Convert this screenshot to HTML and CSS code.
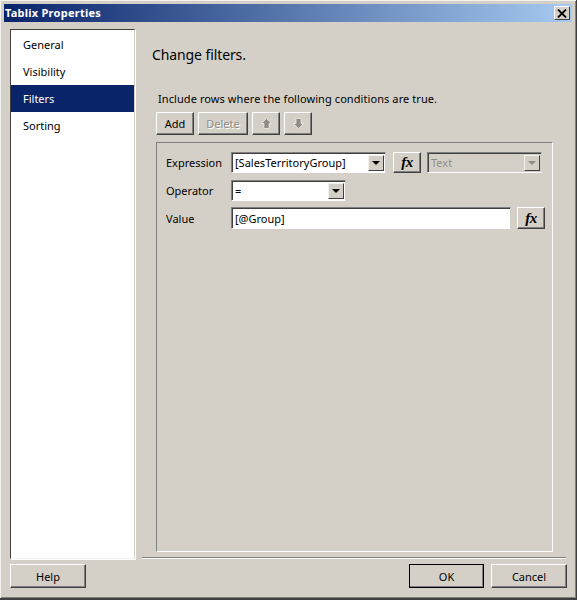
FILE: index.html
```html
<!DOCTYPE html>
<html>
    <head>
        <link rel="stylesheet" href="styles.css">
    </head>
    <body>
        <div class="window">
            <div class="titlebar">
                <span class="title">Tablix Properties</span>
                <div class="close">
                    <svg width="10" height="9" viewBox="0 0 10 9"><path d="M1 0.5L9 8.5M9 0.5L1 8.5" stroke="#000" stroke-width="1.8" fill="none"/></svg>
                </div>
            </div>
            <div class="content">
                <div class="sidebar">
                    <div class="nav-item">General</div>
                    <div class="nav-item">Visibility</div>
                    <div class="nav-item selected">Filters</div>
                    <div class="nav-item">Sorting</div>
                </div>
                <div class="main">
                    <div class="heading">Change filters.</div>
                    <div class="intro">Include rows where the following conditions are true.</div>
                    <div class="toolbar">
                        <div class="btn btn-add">Add</div>
                        <div class="btn btn-delete disabled">Delete</div>
                        <div class="btn btn-move">
                            <svg width="13" height="13" viewBox="0 0 13 13"><path d="M6.5 1.5L11.5 6.5H9V11.5H4V6.5H1.5Z" fill="#8f8c85" stroke="#f4f2ee" stroke-width="0.7"/></svg>
                        </div>
                        <div class="btn btn-move">
                            <svg width="13" height="13" viewBox="0 0 13 13"><path d="M6.5 11.5L11.5 6.5H9V1.5H4V6.5H1.5Z" fill="#8f8c85" stroke="#f4f2ee" stroke-width="0.7"/></svg>
                        </div>
                    </div>
                    <div class="panel">
                        <div class="row row-expression">
                            <span class="label">Expression</span>
                            <div class="field select select-expression">
                                <span class="value">[SalesTerritoryGroup]</span>
                                <span class="arrow"></span>
                            </div>
                            <div class="btn btn-fx">fx</div>
                            <div class="field select select-type disabled">
                                <span class="value">Text</span>
                                <span class="arrow"></span>
                            </div>
                        </div>
                        <div class="row row-operator">
                            <span class="label">Operator</span>
                            <div class="field select select-operator">
                                <span class="value">=</span>
                                <span class="arrow"></span>
                            </div>
                        </div>
                        <div class="row row-value">
                            <span class="label">Value</span>
                            <div class="field input-value">
                                <span class="value">[@Group]</span>
                            </div>
                            <div class="btn btn-fx">fx</div>
                        </div>
                    </div>
                    <div class="divider"></div>
                </div>
            </div>
            <div class="footer">
                <div class="btn btn-footer">Help</div>
                <div class="footer-right">
                    <div class="btn btn-footer btn-default">OK</div>
                    <div class="btn btn-footer">Cancel</div>
                </div>
            </div>
        </div>
    </body>
</html>
```

FILE: styles.css
```css
* {
    box-sizing: border-box;
}
body {
    margin: 0px;
    background-color: #d4d0c8;
    font-family: "Noto Sans", sans-serif;
    font-size: 11px;
    color: #000;
}
.window {
    width: 577px;
    height: 600px;
    padding: 4px 4px 4px 4px;
    display: flex;
    flex-direction: column;
    background-color: #d4d0c8;
    border-right: 1px solid #404040;
    border-bottom: 2px solid #404040;
    box-shadow: inset 1px 1px 0 #f4f2ee, inset -1px -1px 0 #808080;
}
.titlebar {
    height: 18px;
    flex: none;
    display: flex;
    align-items: center;
    justify-content: space-between;
    padding: 0 2px 0 1px;
    background: linear-gradient(to right, #0a246a, #a6caf0);
    color: white;
    font-weight: bold;
}
.title {
    letter-spacing: 0.25px;
    margin-bottom: 1px;
}
.close {
    width: 16px;
    height: 14px;
    display: flex;
    align-items: center;
    justify-content: center;
    background-color: #d4d0c8;
    border: 1px solid;
    border-color: #fff #404040 #404040 #fff;
}
.content {
    flex: 1;
    display: flex;
    padding: 7px 0 0 6px;
    min-height: 0;
}
.sidebar {
    width: 125px;
    height: 530px;
    flex: none;
    padding-top: 1px;
    background-color: white;
    border: 1px solid;
    border-color: #404040 #d4d0c8 #f4f2ee #404040;
    box-shadow: 1px 1px 0 #fff;
}
.nav-item {
    height: 27px;
    line-height: 28px;
    padding-left: 12px;
}
.nav-item.selected {
    background-color: #0a246a;
    color: white;
}
.main {
    flex: 1;
    display: flex;
    flex-direction: column;
    padding-left: 7px;
    min-width: 0;
}
.heading {
    height: 20px;
    margin: 16px 0 0 10px;
    font-size: 14px;
    line-height: 20px;
    letter-spacing: -0.1px;
}
.intro {
    height: 14px;
    margin: 27px 0 0 16px;
    line-height: 14px;
    letter-spacing: 0.08px;
}
.toolbar {
    display: flex;
    gap: 4px;
    margin: 6px 0 0 14px;
}
.btn {
    display: flex;
    align-items: center;
    justify-content: center;
    height: 23px;
    background-color: #d4d0c8;
    border: 1px solid;
    border-color: #fff #404040 #404040 #fff;
    box-shadow: inset -1px -1px 0 #808080;
}
.btn.disabled {
    color: #8f8c85;
    text-shadow: 1px 1px 0 #fff;
}
.btn-add {
    width: 38px;
}
.btn-delete {
    width: 50px;
}
.btn-move {
    width: 28px;
}
.panel {
    width: 397px;
    height: 410px;
    margin: 7px 0 0 14px;
    padding: 9px 7px 0 9px;
    border: 1px solid;
    border-color: #808080 #fff #fff #808080;
}
.row {
    display: flex;
    align-items: center;
    height: 21px;
    margin-bottom: 7px;
}
.row-operator {
    margin-bottom: 6px;
}
.row-value {
    height: 22px;
}
.label {
    width: 65px;
    flex: none;
}
.field {
    height: 100%;
    display: flex;
    align-items: center;
    justify-content: space-between;
    padding: 0 1px 0 3px;
    background-color: white;
    border: 1px solid;
    border-color: #808080 #d4d0c8 #fff #808080;
    box-shadow: inset 1px 1px 0 #404040;
}
.select-expression {
    width: 155px;
}
.select-type {
    width: 115px;
    margin-left: 6px;
}
.select-operator {
    width: 115px;
}
.input-value {
    width: 281px;
}
.field.disabled {
    background-color: #d4d0c8;
    color: #8f8c85;
}
.arrow {
    width: 16px;
    height: 16px;
    flex: none;
    position: relative;
    background-color: #d4d0c8;
    border: 1px solid;
    border-color: #f4f2ee #404040 #404040 #f4f2ee;
}
.arrow::after {
    content: "";
    position: absolute;
    left: 3px;
    top: 5px;
    border-style: solid;
    border-width: 4px 4px 0 4px;
    border-color: #000 transparent transparent transparent;
}
.disabled .arrow::after {
    border-top-color: #8f8c85;
}
.btn-fx {
    width: 28px;
    height: 100%;
    margin-left: 7px;
    font-family: "Liberation Serif", serif;
    font-style: italic;
    font-weight: bold;
    font-size: 15px;
    letter-spacing: -0.5px;
}
.row-value .btn-fx {
    margin-left: 6px;
}
.divider {
    width: 424px;
    height: 2px;
    margin-top: 5px;
    border-top: 1px solid #808080;
    border-bottom: 1px solid #fff;
}
.footer {
    height: 24px;
    flex: none;
    display: flex;
    justify-content: space-between;
    margin: 0 5px 6px 6px;
}
.footer-right {
    display: flex;
    gap: 7px;
}
.btn-footer {
    width: 76px;
    height: 24px;
}
.btn-default {
    outline: 1px solid #000;
    outline-offset: -1px;
    width: 75px;
}
```
